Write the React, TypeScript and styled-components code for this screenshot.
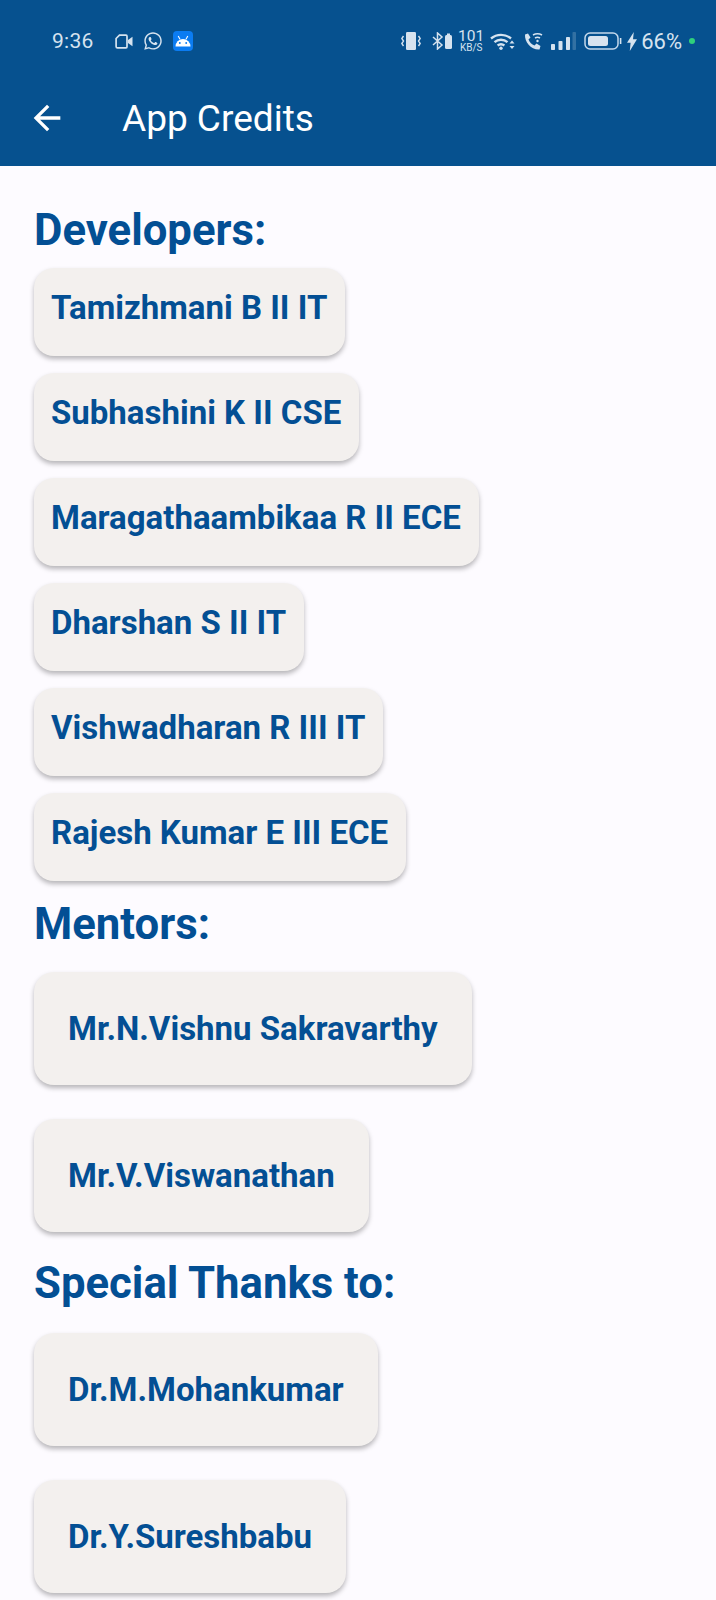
import React from 'react';
import styled, { createGlobalStyle } from 'styled-components';
import { FaWhatsapp } from 'react-icons/fa';

const GlobalStyle = createGlobalStyle`
  html, body {
    margin: 0;
    padding: 0;
    background: #fdfbff;
    font-family: Roboto, "Liberation Sans", sans-serif;
  }
`;

const Page = styled.div`
  width: 716px;
  height: 1600px;
  overflow: hidden;
  background: #fdfbff;
`;

const Header = styled.header`
  height: 166px;
  background: #06518f;
  display: flex;
  flex-direction: column;
`;

const StatusBar = styled.div`
  height: 82px;
  display: flex;
  align-items: center;
  padding: 0 21px 0 52px;
  color: #d6e3ef;
`;

const Time = styled.span`
  font-size: 21px;
  width: 63px;
  letter-spacing: 0.3px;
`;

const LeftIcons = styled.div`
  display: flex;
  align-items: center;
  gap: 10px;
`;

const RightIcons = styled.div`
  margin-left: auto;
  display: flex;
  align-items: center;
  gap: 8px;
`;

const AppBadge = styled.div`
  width: 20px;
  height: 20px;
  border-radius: 4px;
  background: #0b7cf2;
  display: flex;
  align-items: center;
  justify-content: center;
`;

const Speed = styled.div`
  width: 22px;
  display: flex;
  flex-direction: column;
  align-items: center;
`;

const SpeedValue = styled.span`
  font-size: 15.5px;
  line-height: 13px;
`;

const SpeedUnit = styled.span`
  font-size: 10px;
  line-height: 9px;
`;

const Percent = styled.span`
  font-size: 22px;
  margin-left: -4px;
`;

const Dot = styled.span`
  width: 6px;
  height: 6px;
  border-radius: 50%;
  background: #2fd07c;
  margin-left: -1px;
`;

const VibrateSvg = styled.svg`
  margin-right: 3px;
`;

const BatterySvg = styled.svg`
  margin-right: -3px;
`;

const AppBar = styled.div`
  flex: 1;
  display: flex;
  align-items: center;
  padding: 0 0 12px 27px;
  color: #ffffff;
`;

const BackButton = styled.svg`
  width: 40px;
  height: 40px;
  fill: #ffffff;
`;

const Title = styled.h1`
  margin: 0 0 0 55px;
  font-size: 37px;
  font-weight: 400;
`;

const Content = styled.main`
  display: flex;
  flex-direction: column;
  align-items: flex-start;
  padding: 0 0 0 34px;
  color: #034f94;
`;

const SectionTitle = styled.h2`
  margin: ${(p: { $top: number; $bottom: number }) => `${p.$top}px 0 ${p.$bottom}px 0`};
  font-size: 43.7px;
  line-height: 47px;
  font-weight: 700;
`;

const SmallChip = styled.div`
  height: 88px;
  box-sizing: border-box;
  margin-bottom: 17px;
  padding: 22px 18px 0 17px;
  font-size: 33px;
  line-height: 36px;
  font-weight: 700;
  background: #f3f0ee;
  border-radius: 20px;
  box-shadow: 0 3px 5px rgba(0, 0, 0, 0.28);
`;

const LargeChip = styled.div`
  height: 113px;
  box-sizing: border-box;
  margin-bottom: 34px;
  padding: 0 34px;
  display: flex;
  align-items: center;
  font-size: 33px;
  font-weight: 700;
  background: #f3f0ee;
  border-radius: 20px;
  box-shadow: 0 3px 5px rgba(0, 0, 0, 0.28);
`;

const developers = [
  'Tamizhmani B II IT',
  'Subhashini K II CSE',
  'Maragathaambikaa R II ECE',
  'Dharshan S II IT',
  'Vishwadharan R III IT',
  'Rajesh Kumar E III ECE',
];
const mentors = ['Mr.N.Vishnu Sakravarthy', 'Mr.V.Viswanathan'];
const thanks = ['Dr.M.Mohankumar', 'Dr.Y.Sureshbabu'];

const VideoIcon = () => (
  <svg width="18" height="15" viewBox="0 0 18 15" fill="none" stroke="currentColor" strokeWidth="1.7">
    <path d="M4.5 1.2H11a1 1 0 0 1 1 1v10.6a1 1 0 0 1-1 1H2.5a1.4 1.4 0 0 1-1.4-1.4V4.5z" />
    <path d="M13 6l4.5-3.2v9.4L13 9z" fill="currentColor" stroke="none" />
  </svg>
);

const AndroidIcon = () => (
  <svg width="16" height="12" viewBox="0 0 16 12" fill="#ffffff">
    <path d="M0.5 11.5a7.5 7.5 0 0 1 15 0z" />
    <path d="M3.2 1l1.8 3.2M12.8 1L11 4.2" stroke="#ffffff" strokeWidth="1.1" />
    <circle cx="4.8" cy="8" r="0.95" fill="#0b7cf2" />
    <circle cx="11.2" cy="8" r="0.95" fill="#0b7cf2" />
  </svg>
);

const VibrateIcon = () => (
  <VibrateSvg width="20" height="18" viewBox="0 0 20 18" fill="currentColor">
    <rect x="5" y="0" width="10" height="18" rx="1.2" />
    <path d="M2.5 4L0.8 6.5 2.5 9 0.8 11.5 2.5 14M17.5 4l1.7 2.5L17.5 9l1.7 2.5L17.5 14" fill="none" stroke="currentColor" strokeWidth="1.4" />
  </VibrateSvg>
);

const BluetoothIcon = () => (
  <svg width="20" height="18" viewBox="0 0 20 18" fill="none" stroke="currentColor" strokeWidth="1.5">
    <path d="M1 5l9 8-4.5 4V1L10 5l-9 8" />
    <rect x="13" y="3" width="7" height="14" rx="1.5" fill="currentColor" stroke="none" />
    <rect x="15" y="1.5" width="3" height="2" fill="currentColor" stroke="none" />
  </svg>
);

const WifiIcon = () => (
  <svg width="25" height="18" viewBox="0 0 25 18" fill="none" stroke="currentColor" strokeWidth="2.4">
    <path d="M1 6.5a15.5 15.5 0 0 1 20 0M4.5 10.2a10 10 0 0 1 13 0" />
    <path d="M7.6 13.5a5.5 5.5 0 0 1 6.8 0" />
    <circle cx="11" cy="16.2" r="1.7" fill="currentColor" stroke="none" />
    <path d="M19.5 11.5l2.5-3 2.5 3zM19.5 14l2.5 3 2.5-3z" fill="currentColor" stroke="none" />
  </svg>
);

const CallWifiIcon = () => (
  <svg width="20" height="19" viewBox="0 0 20 19" fill="none">
    <path d="M2 2.5l3-1 2.5 4-2 2a11 11 0 0 0 6 6l2-2 4 2.5-1 3.5C8 18 1.5 10 2 2.5z" fill="currentColor" />
    <path d="M10 3a9 9 0 0 1 9 0M12 6a5 5 0 0 1 5 0" stroke="currentColor" strokeWidth="1.5" />
    <circle cx="14.5" cy="9" r="1.2" fill="currentColor" />
  </svg>
);

const SignalIcon = () => (
  <svg width="25" height="18" viewBox="0 0 25 18" fill="currentColor">
    <rect x="0" y="12" width="4" height="6" rx="0.8" />
    <rect x="7.5" y="9" width="4" height="9" rx="0.8" />
    <rect x="15" y="5" width="4" height="13" rx="0.8" />
    <rect x="21.5" y="0" width="3.5" height="18" rx="0.8" opacity="0.22" />
  </svg>
);

const BatteryIcon = () => (
  <BatterySvg width="38" height="18" viewBox="0 0 38 18" fill="none">
    <rect x="1" y="1" width="33" height="16" rx="5" stroke="#c3d8ec" strokeWidth="1.5" />
    <rect x="4" y="4" width="20" height="10" rx="2.5" fill="#d8e3ef" />
    <path d="M36.6 6v6" stroke="currentColor" strokeWidth="1.6" />
  </BatterySvg>
);

const BoltIcon = () => (
  <svg width="10" height="19" viewBox="0 0 10 19" fill="currentColor">
    <path d="M6.8 0L0 10.8h3.6L2.8 19 10 7.2H6z" />
  </svg>
);

const App = () => (
  <Page>
    <GlobalStyle />
    <Header>
      <StatusBar>
        <Time>9:36</Time>
        <LeftIcons>
          <VideoIcon />
          <FaWhatsapp size={20} />
          <AppBadge>
            <AndroidIcon />
          </AppBadge>
        </LeftIcons>
        <RightIcons>
          <VibrateIcon />
          <BluetoothIcon />
          <Speed>
            <SpeedValue>101</SpeedValue>
            <SpeedUnit>KB/S</SpeedUnit>
          </Speed>
          <WifiIcon />
          <CallWifiIcon />
          <SignalIcon />
          <BatteryIcon />
          <BoltIcon />
          <Percent>66%</Percent>
          <Dot />
        </RightIcons>
      </StatusBar>
      <AppBar>
        <BackButton viewBox="0 0 24 24">
          <path d="M20 11H7.83l5.59-5.59L12 4l-8 8 8 8 1.41-1.41L7.83 13H20v-2z" />
        </BackButton>
        <Title>App Credits</Title>
      </AppBar>
    </Header>
    <Content>
      <SectionTitle $top={41} $bottom={14}>Developers:</SectionTitle>
      {developers.map((name) => (
        <SmallChip key={name}>{name}</SmallChip>
      ))}
      <SectionTitle $top={3} $bottom={24}>Mentors:</SectionTitle>
      {mentors.map((name) => (
        <LargeChip key={name}>{name}</LargeChip>
      ))}
      <SectionTitle $top={-6} $bottom={26}>Special Thanks to:</SectionTitle>
      {thanks.map((name) => (
        <LargeChip key={name}>{name}</LargeChip>
      ))}
    </Content>
  </Page>
);

export default App;
